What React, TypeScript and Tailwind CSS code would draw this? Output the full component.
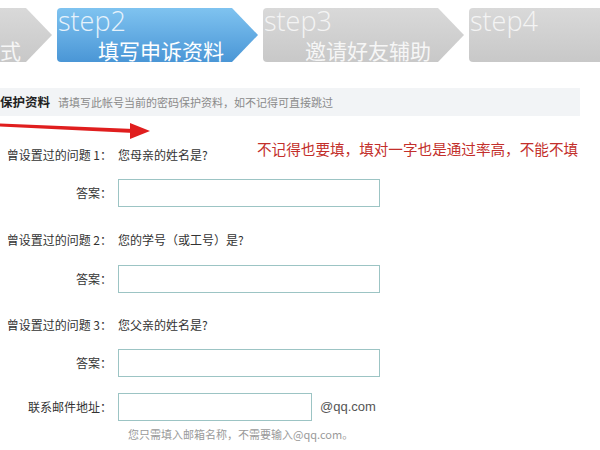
import React from 'react';

const cjk = '"Noto Sans CJK SC", "Noto Sans", sans-serif';

type StepProps = {
  label: string;
  title: string;
  active?: boolean;
  last?: boolean;
  className?: string;
  titleClass?: string;
};

function StepShape({ active, last }: { active?: boolean; last?: boolean }) {
  const id = active ? 'stepBlue' : 'stepGray';
  const d = last
    ? 'M4,0 H240 V54 H4 Q0,54 0,50 V4 Q0,0 4,0 Z'
    : 'M4,0 H175 L201,27 L175,54 H4 Q0,54 0,50 V4 Q0,0 4,0 Z';
  return (
    <svg className="absolute inset-0" width={last ? 240 : 201} height={54} viewBox={`0 0 ${last ? 240 : 201} 54`}>
      <defs>
        <linearGradient id="stepBlue" x1="0" y1="0" x2="0" y2="1">
          <stop offset="0" stopColor="#7fc3f0" />
          <stop offset="1" stopColor="#4a96d6" />
        </linearGradient>
        <linearGradient id="stepGray" x1="0" y1="0" x2="0" y2="1">
          <stop offset="0" stopColor="#d9d9d9" />
          <stop offset="1" stopColor="#c8c8c8" />
        </linearGradient>
      </defs>
      <path d={d} fill={`url(#${id})`} />
    </svg>
  );
}

function Step({ label, title, active, last, className = '', titleClass = '' }: StepProps) {
  return (
    <div className={`relative h-[54px] shrink-0 ${last ? 'w-[240px]' : 'w-[201px]'} ${className}`}>
      <StepShape active={active} last={last} />
      <div className="relative flex h-full flex-col">
        <div
          className={`h-[28px] pl-[1px] text-[27px] font-light leading-[26px] ${active ? 'text-[#e6f2fb]' : 'text-[#f4f4f4]'}`}
          style={{ fontFamily: '"Open Sans", "Noto Sans", sans-serif' }}
        >
          {label}
        </div>
        <div
          className={`mt-[3px] text-[21px] leading-[22px] ${active ? 'text-white' : 'text-[#f6f6f6]'} ${titleClass}`}
          style={{ fontFamily: cjk }}
        >
          {title}
        </div>
      </div>
    </div>
  );
}

function Row({ label, children, className = '' }: { label: string; children: React.ReactNode; className?: string }) {
  return (
    <div className={`flex items-center ${className}`}>
      <div className="w-[112px] shrink-0 whitespace-nowrap text-right text-[12px] text-[#333]">{label}</div>
      <div className="ml-[6px] flex items-center">{children}</div>
    </div>
  );
}

function Input({ width }: { width: string }) {
  return <div className={`h-[28px] ${width} border border-[#9cc4c4] bg-white`} />;
}

export default function App() {
  return (
    <div className="relative h-[450px] w-[600px] overflow-hidden bg-white" style={{ fontFamily: cjk }}>
      <div className="flex gap-[5px] pt-[8px]">
        <Step label="" title="方式" className="ml-[-149px]" titleClass="pl-[128px]" />
        <Step label="step2" title="填写申诉资料" active titleClass="pl-[41px]" />
        <Step label="step3" title="邀请好友辅助" titleClass="pl-[42px]" />
        <Step label="step4" title="" last />
      </div>

      <div className="mt-[26px] flex h-[28px] w-[580px] items-center bg-[#f2f4f6]">
        <span className="text-[12.5px] font-bold text-[#222]">保护资料</span>
        <span className="ml-[8px] text-[11px] text-[#8a8a8a]">请填写此帐号当前的密码保护资料，如不记得可直接跳过</span>
      </div>

      <div className="mt-[29px] flex flex-col">
        <Row label="曾设置过的问题 1：" className="h-[20px]">
          <span className="text-[12px] text-[#333]">您母亲的姓名是?</span>
        </Row>
        <Row label="答案：" className="mt-[14px]">
          <Input width="w-[262px]" />
        </Row>

        <Row label="曾设置过的问题 2：" className="mt-[23px] h-[20px]">
          <span className="text-[12px] text-[#333]">您的学号（或工号）是?</span>
        </Row>
        <Row label="答案：" className="mt-[15px]">
          <Input width="w-[262px]" />
        </Row>

        <Row label="曾设置过的问题 3：" className="mt-[22px] h-[20px]">
          <span className="text-[12px] text-[#333]">您父亲的姓名是?</span>
        </Row>
        <Row label="答案：" className="mt-[14px]">
          <Input width="w-[262px]" />
        </Row>

        <Row label="联系邮件地址：" className="mt-[16px]">
          <Input width="w-[194px]" />
          <span
            className="ml-[8px] text-[13px] text-[#555]"
            style={{ fontFamily: '"Liberation Sans", Arial, sans-serif' }}
          >
            @qq.com
          </span>
        </Row>
        <div className="ml-[128px] mt-[5px] text-[11px] text-[#9a9a9a]">您只需填入邮箱名称，不需要输入@qq.com。</div>
      </div>

      {/* annotation overlays */}
      <svg className="absolute left-0 top-[118px]" width="152" height="24" viewBox="0 0 152 24">
        <path d="M0,5.5 L134,11 L134,15 L0,8.5 Z" fill="#e01e1e" />
        <path d="M130,5 L150,13 L130,21 Z" fill="#e01e1e" />
      </svg>
      <div className="absolute left-[257px] top-[139px] text-[14.6px] leading-[20px] text-[#c32f2b]">
        不记得也要填，填对一字也是通过率高，不能不填
      </div>
    </div>
  );
}
